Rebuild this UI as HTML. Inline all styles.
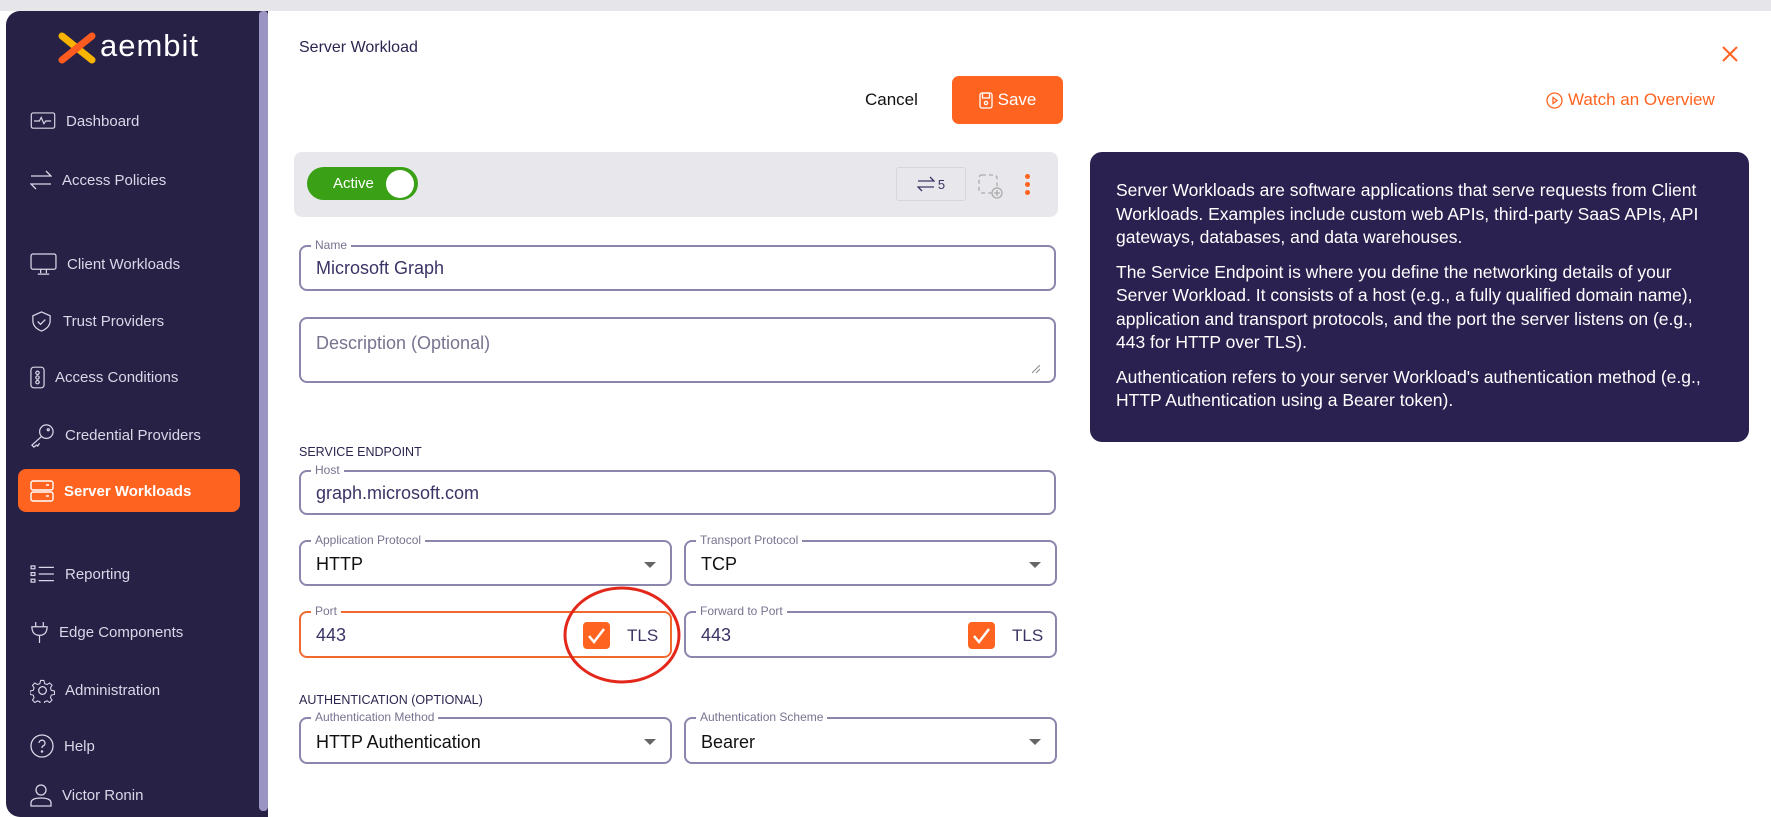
<!DOCTYPE html>
<html><head><meta charset="utf-8">
<style>
*{box-sizing:border-box;margin:0;padding:0}
body{width:1771px;height:817px;background:#fff;font-family:"Liberation Sans",sans-serif;position:relative;overflow:hidden;color:#2b2650}
.abs{position:absolute}
.topbar{left:0;top:0;width:1771px;height:11px;background:#e6e6ea}
.side{left:6px;top:11px;width:262px;height:806px;background:#262145;border-radius:14px 0 0 14px}
.scroll{left:259px;top:11px;width:9px;height:800px;background:#9a95c2;border-radius:4px}
.nav{position:absolute;left:30px;color:#d9d7e8;font-size:15px;display:flex;align-items:center;gap:10px;white-space:nowrap}
.nav svg{flex:none}
.active{left:18px;top:469px;width:222px;height:43px;background:#ff6320;border-radius:8px}
.field{position:absolute;border:2px solid #8a86ac;border-radius:8px}
.lbl{position:absolute;top:-9px;left:10px;background:#fff;padding:0 4px;font-size:12px;color:#777390;line-height:14px}
.val{position:absolute;left:15px;font-size:18px;color:#3a3466}
.caret{position:absolute;right:14px;top:20px;width:0;height:0;border-left:6px solid transparent;border-right:6px solid transparent;border-top:6px solid #666}
.chk{position:absolute;width:27px;height:27px;background:#ff6320;border-radius:4px}
.sec{position:absolute;left:299px;font-size:12.5px;color:#2b2650}
.info{left:1090px;top:152px;width:659px;height:290px;background:#2a2150;border-radius:12px;color:#fff;font-size:17.5px;line-height:23.5px;padding:27px 26px;white-space:nowrap}
.info p{margin-bottom:11px}
</style></head><body>
<div class="abs topbar"></div>
<div class="abs side"></div>
<div class="abs scroll"></div>
<svg class="abs" style="left:58px;top:30px" width="40" height="34" viewBox="0 0 40 34"><path d="M4 6 L34 30" stroke="#f8b400" stroke-width="7" stroke-linecap="round"/><path d="M34 6 L4 30" stroke="#ff5a1f" stroke-width="7" stroke-linecap="round"/></svg>
<div class="abs" style="left:100px;top:28px;color:#fff;font-size:31px;letter-spacing:1px">aembit</div>
<div class="abs active"></div>
<div class="nav" style="top:112px"><svg width="26" height="18" viewBox="0 0 28 20" fill="none" stroke="#d9d7e8" stroke-width="1.3"><rect x="1" y="1" width="26" height="17" rx="2"/><path d="M4 10h6l2-4 3 7 2-3h6"/></svg><span>Dashboard</span></div>
<div class="nav" style="top:170px"><svg width="22" height="20" viewBox="0 0 22 20" fill="none" stroke="#d9d7e8" stroke-width="1.3"><path d="M1 6h20l-5-5M21 14H1l5 5"/></svg><span>Access Policies</span></div>
<div class="nav" style="top:253px"><svg width="27" height="23" viewBox="0 0 28 24" fill="none" stroke="#d9d7e8" stroke-width="1.3"><rect x="1" y="1" width="26" height="16" rx="2"/><path d="M11 17v4M17 17v4M8 22h12"/></svg><span>Client Workloads</span></div>
<div class="nav" style="top:310px"><svg width="23" height="23" viewBox="0 0 24 24" fill="none" stroke="#d9d7e8" stroke-width="1.3"><path d="M12 2l9 4v5c0 6-4 9-9 11-5-2-9-5-9-11V6z"/><path d="M8 12l3 3 5-5"/></svg><span>Trust Providers</span></div>
<div class="nav" style="top:366px;left:30px"><svg width="15" height="23" viewBox="0 0 16 24" fill="none" stroke="#d9d7e8" stroke-width="1.3"><rect x="1" y="1" width="14" height="22" rx="3"/><circle cx="8" cy="7" r="1.8"/><circle cx="8" cy="12" r="1.8"/><circle cx="8" cy="17" r="1.8"/></svg><span>Access Conditions</span></div>
<div class="nav" style="top:423px"><svg width="25" height="25" viewBox="0 0 26 26" fill="none" stroke="#d9d7e8" stroke-width="1.3"><circle cx="17" cy="9" r="7"/><path d="M12 14L2 23l2 2 3-2 1 1 2-3"/><circle cx="19" cy="7" r="1"/></svg><span>Credential Providers</span></div>
<div class="nav" style="top:480px;color:#fff;font-weight:bold"><svg width="24" height="22" viewBox="0 0 24 22" fill="none" stroke="#fff" stroke-width="1.4"><rect x="1" y="1" width="22" height="9" rx="2"/><rect x="1" y="12" width="22" height="9" rx="2"/><path d="M16 5h3M16 16h3"/></svg><span>Server Workloads</span></div>
<div class="nav" style="top:565px"><svg width="25" height="19" viewBox="0 0 26 20" fill="none" stroke="#d9d7e8" stroke-width="1.3"><rect x="1" y="1" width="4" height="3"/><rect x="1" y="8" width="4" height="3"/><rect x="1" y="15" width="4" height="3"/><path d="M9 2.5h16M9 9.5h16M9 16.5h16"/></svg><span>Reporting</span></div>
<div class="nav" style="top:621px"><svg width="19" height="23" viewBox="0 0 20 24" fill="none" stroke="#d9d7e8" stroke-width="1.3"><path d="M6 1v5M14 1v5M2 6h16c0 6-3 9-8 9s-8-3-8-9zM10 15v8"/></svg><span>Edge Components</span></div>
<div class="nav" style="top:678px"><svg width="25" height="25" viewBox="0 0 26 26" fill="none" stroke="#d9d7e8" stroke-width="1.3"><path d="M11 1h4l1 4 3 1 3-2 3 3-2 3 1 3 4 1v4l-4 1-1 3 2 3-3 3-3-2-3 1-1 4h-4l-1-4-3-1-3 2-3-3 2-3-1-3-4-1v-4l4-1 1-3-2-3 3-3 3 2 3-1z" transform="scale(.85) translate(2 2)"/><circle cx="13" cy="13" r="4"/></svg><span>Administration</span></div>
<div class="nav" style="top:734px"><svg width="24" height="24" viewBox="0 0 24 24" fill="none" stroke="#d9d7e8" stroke-width="1.3"><circle cx="12" cy="12" r="11"/><path d="M9 9a3 3 0 1 1 4 3c-1 .5-1 1-1 2"/><circle cx="12" cy="17.5" r=".6"/></svg><span>Help</span></div>
<div class="nav" style="top:783px"><svg width="22" height="24" viewBox="0 0 22 24" fill="none" stroke="#d9d7e8" stroke-width="1.3"><circle cx="11" cy="7" r="5"/><path d="M1 23v-3c0-3 3-5 10-5s10 2 10 5v3z"/></svg><span>Victor Ronin</span></div>

<div class="abs" style="left:299px;top:39px;font-size:16px;color:#2b2650">Server Workload</div>
<svg class="abs" style="left:1722px;top:46px" width="16" height="16"><path d="M1 1L15 15M15 1L1 15" stroke="#ff6320" stroke-width="2"/></svg>
<div class="abs" style="left:865px;top:90px;font-size:17px;color:#111">Cancel</div>
<div class="abs" style="left:952px;top:76px;width:111px;height:48px;background:#ff6320;border-radius:7px;color:#fff;font-size:17px;display:flex;align-items:center;justify-content:center;gap:5px"><svg width="14" height="17" viewBox="0 0 14 17" fill="none" stroke="#fff" stroke-width="1.3"><rect x="1" y="1" width="12" height="15" rx="2"/><rect x="3.5" y="1" width="7" height="5"/><circle cx="7" cy="11" r="1.6"/></svg>Save</div>
<div class="abs" style="left:1546px;top:90px;color:#ff6320;font-size:17px;display:flex;align-items:center;gap:5px"><svg width="17" height="17" viewBox="0 0 17 17" fill="none" stroke="#ff6320" stroke-width="1.3"><circle cx="8.5" cy="8.5" r="7.5"/><path d="M7 5.5v6l4-3z"/></svg>Watch an Overview</div>

<div class="abs" style="left:294px;top:152px;width:764px;height:65px;background:#e8e8ec;border-radius:8px"></div>
<div class="abs" style="left:307px;top:167px;width:111px;height:33px;background:#3aa016;border-radius:17px;color:#fff;font-size:15px;line-height:33px;padding-left:26px">Active</div>
<div class="abs" style="left:386px;top:170px;width:28px;height:28px;background:#fff;border-radius:50%"></div>
<div class="abs" style="left:896px;top:167px;width:70px;height:34px;border:1px solid #d6d6de;border-radius:3px;font-size:13px;color:#3a3466;display:flex;align-items:center;justify-content:center;gap:3px"><svg width="18" height="16" viewBox="0 0 18 16" fill="none" stroke="#3a3466" stroke-width="1.3"><path d="M1 5h16l-4-4M17 11H1l4 4"/></svg>5</div>
<svg class="abs" style="left:978px;top:174px" width="26" height="26" viewBox="0 0 26 26" fill="none" stroke="#aaa" stroke-width="1.3"><rect x="1" y="1" width="18" height="18" rx="3" stroke-dasharray="4 3"/><circle cx="19" cy="19" r="5" fill="#e8e8ec"/><path d="M19 16v6M16 19h6"/></svg>
<div class="abs" style="left:1025px;top:174px;width:5px;height:5px;background:#ff6320;border-radius:50%;box-shadow:0 8px 0 #ff6320,0 16px 0 #ff6320"></div>

<div class="field" style="left:299px;top:245px;width:757px;height:46px"><div class="lbl">Name</div><div class="val" style="top:11px">Microsoft Graph</div></div>
<div class="field" style="left:299px;top:317px;width:757px;height:66px"><div class="val" style="top:14px;color:#777390">Description (Optional)</div>
<svg style="position:absolute;right:14px;bottom:8px" width="8" height="8"><path d="M0 8L8 0M4 8L8 4" stroke="#888" stroke-width="1"/></svg></div>
<div class="sec" style="top:445px">SERVICE ENDPOINT</div>
<div class="field" style="left:299px;top:470px;width:757px;height:45px"><div class="lbl">Host</div><div class="val" style="top:11px">graph.microsoft.com</div></div>
<div class="field" style="left:299px;top:540px;width:373px;height:46px"><div class="lbl">Application Protocol</div><div class="val" style="top:12px;color:#111">HTTP</div><div class="caret"></div></div>
<div class="field" style="left:684px;top:540px;width:373px;height:46px"><div class="lbl">Transport Protocol</div><div class="val" style="top:12px;color:#111">TCP</div><div class="caret"></div></div>
<div class="field" style="left:299px;top:611px;width:373px;height:47px;border-color:#f06a30"><div class="lbl">Port</div><div class="val" style="top:12px">443</div>
<div class="chk" style="left:282px;top:9px"><svg width="27" height="27"><path d="M6 14l5 6 10-13" stroke="#fff" stroke-width="2.5" fill="none"/></svg></div><div class="val" style="left:326px;top:13px;font-size:17px">TLS</div></div>
<div class="field" style="left:684px;top:611px;width:373px;height:47px"><div class="lbl">Forward to Port</div><div class="val" style="top:12px">443</div>
<div class="chk" style="left:282px;top:9px"><svg width="27" height="27"><path d="M6 14l5 6 10-13" stroke="#fff" stroke-width="2.5" fill="none"/></svg></div><div class="val" style="left:326px;top:13px;font-size:17px">TLS</div></div>
<svg class="abs" style="left:560px;top:585px" width="130" height="105"><ellipse cx="62" cy="50" rx="57" ry="47" fill="none" stroke="#e3281b" stroke-width="3"/></svg>
<div class="sec" style="top:693px">AUTHENTICATION (OPTIONAL)</div>
<div class="field" style="left:299px;top:717px;width:373px;height:47px"><div class="lbl">Authentication Method</div><div class="val" style="top:13px;color:#111">HTTP Authentication</div><div class="caret"></div></div>
<div class="field" style="left:684px;top:717px;width:373px;height:47px"><div class="lbl">Authentication Scheme</div><div class="val" style="top:13px;color:#111">Bearer</div><div class="caret"></div></div>

<div class="abs info">
<p>Server Workloads are software applications that serve requests from Client<br>Workloads. Examples include custom web APIs, third-party SaaS APIs, API<br>gateways, databases, and data warehouses.</p>
<p>The Service Endpoint is where you define the networking details of your<br>Server Workload. It consists of a host (e.g., a fully qualified domain name),<br>application and transport protocols, and the port the server listens on (e.g.,<br>443 for HTTP over TLS).</p>
<p>Authentication refers to your server Workload's authentication method (e.g.,<br>HTTP Authentication using a Bearer token).</p>
</div>
</body></html>
